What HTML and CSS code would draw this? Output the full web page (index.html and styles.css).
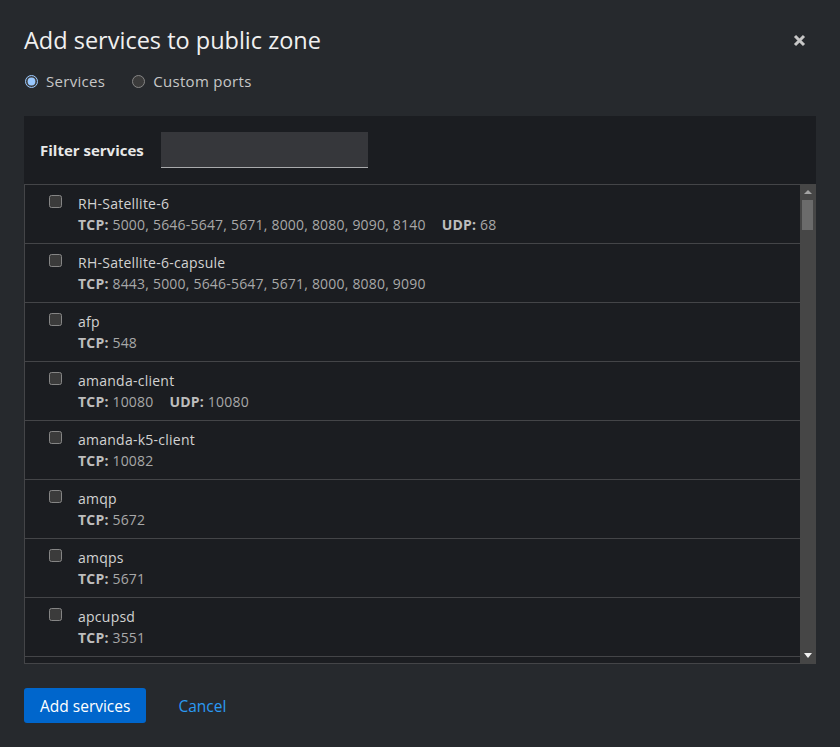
FILE: index.html
```html
<!DOCTYPE html>
<html lang="en">
<head>
<meta charset="utf-8">
<title>Add services to public zone</title>
<link rel="stylesheet" href="styles.css">
</head>
<body>
<div class="dialog">
  <header class="header">
    <h1 class="title">Add services to public zone</h1>
    <button class="close" type="button" aria-label="Close">
      <svg width="13" height="13" viewBox="0 0 13 13"><path d="M2 2 L11 11 M11 2 L2 11" stroke="#c7c7c7" stroke-width="3" stroke-linecap="butt"/></svg>
    </button>
  </header>
  <div class="radios">
    <label class="radio"><input type="radio" name="mode" checked> Services</label>
    <label class="radio"><input type="radio" name="mode"> Custom ports</label>
  </div>
  <section class="panel">
    <div class="filter">
      <label class="filter-label" for="filter">Filter services</label>
      <input class="filter-input" id="filter" type="text">
    </div>
    <div class="list-box">
    <ul class="list">
      <li class="row"><input type="checkbox" class="check"><div><div class="name">RH-Satellite-6</div><div class="ports"><span class="proto"><b>TCP:</b> 5000, 5646-5647, 5671, 8000, 8080, 9090, 8140</span><span class="proto"><b>UDP:</b> 68</span></div></div></li>
      <li class="row"><input type="checkbox" class="check"><div><div class="name">RH-Satellite-6-capsule</div><div class="ports"><span class="proto"><b>TCP:</b> 8443, 5000, 5646-5647, 5671, 8000, 8080, 9090</span></div></div></li>
      <li class="row"><input type="checkbox" class="check"><div><div class="name">afp</div><div class="ports"><span class="proto"><b>TCP:</b> 548</span></div></div></li>
      <li class="row"><input type="checkbox" class="check"><div><div class="name">amanda-client</div><div class="ports"><span class="proto"><b>TCP:</b> 10080</span><span class="proto"><b>UDP:</b> 10080</span></div></div></li>
      <li class="row"><input type="checkbox" class="check"><div><div class="name">amanda-k5-client</div><div class="ports"><span class="proto"><b>TCP:</b> 10082</span></div></div></li>
      <li class="row"><input type="checkbox" class="check"><div><div class="name">amqp</div><div class="ports"><span class="proto"><b>TCP:</b> 5672</span></div></div></li>
      <li class="row"><input type="checkbox" class="check"><div><div class="name">amqps</div><div class="ports"><span class="proto"><b>TCP:</b> 5671</span></div></div></li>
      <li class="row"><input type="checkbox" class="check"><div><div class="name">apcupsd</div><div class="ports"><span class="proto"><b>TCP:</b> 3551</span></div></div></li>
      <li class="row"><input type="checkbox" class="check"><div><div class="name">audit</div><div class="ports"><span class="proto"><b>TCP:</b> 60</span></div></div></li>
      <li class="row"><input type="checkbox" class="check"><div><div class="name">bacula</div><div class="ports"><span class="proto"><b>TCP:</b> 9101, 9102, 9103</span></div></div></li>
      <li class="row"><input type="checkbox" class="check"><div><div class="name">bacula-client</div><div class="ports"><span class="proto"><b>TCP:</b> 9102</span></div></div></li>
      <li class="row"><input type="checkbox" class="check"><div><div class="name">bgp</div><div class="ports"><span class="proto"><b>TCP:</b> 179</span></div></div></li>
      <li class="row"><input type="checkbox" class="check"><div><div class="name">bitcoin</div><div class="ports"><span class="proto"><b>TCP:</b> 8333</span></div></div></li>
      <li class="row"><input type="checkbox" class="check"><div><div class="name">bitcoin-rpc</div><div class="ports"><span class="proto"><b>TCP:</b> 8332</span></div></div></li>
    </ul>
    <div class="scrollbar" aria-hidden="true">
      <span class="sb-up"></span>
      <span class="sb-thumb"></span>
      <span class="sb-space"></span>
      <span class="sb-down"></span>
    </div>
    </div>
  </section>
  <footer class="footer">
    <button class="btn btn-primary" type="button">Add services</button>
    <button class="btn btn-link" type="button">Cancel</button>
  </footer>
</div>
</body>
</html>
```

FILE: styles.css
```css
html {
  color-scheme: dark;
}

body {
  margin: 0;
  background: #26292d;
  font-family: "Open Sans", "Liberation Sans", sans-serif;
  color: #d2d2d2;
}

.dialog {
  padding: 24px;
}

.header {
  display: flex;
  align-items: center;
  justify-content: space-between;
  height: 32px;
}

.title {
  margin: 0;
  font-size: 23.5px;
  font-weight: 400;
  line-height: 32px;
  color: #f0f0f0;
}

.close {
  width: 33px;
  height: 32px;
  padding: 0;
  border: 0;
  background: none;
  display: flex;
  align-items: center;
  justify-content: center;
}

.radios {
  display: flex;
  align-items: center;
  margin-top: 13px;
  height: 24px;
}

.radio {
  display: flex;
  align-items: center;
  gap: 8px;
  font-size: 15px;
  letter-spacing: 0.3px;
  color: #c7c7c7;
  margin-right: 26px;
}

.radio input {
  margin: 0 0 0 1px;
  width: 13px;
  height: 13px;
}

.panel {
  margin-top: 23px;
  background: #1b1d21;
}

.filter {
  display: flex;
  align-items: center;
  gap: 17px;
  padding: 16px;
}

.filter-label {
  font-size: 15px;
  font-weight: 700;
  color: #e8e8e8;
}

.filter-input {
  box-sizing: border-box;
  width: 207px;
  height: 36px;
  background: #36373b;
  border: 0;
  border-bottom: 1px solid #a9aaac;
  color: #e0e0e0;
  font: inherit;
  outline: none;
}

.list-box {
  display: flex;
  height: 480px;
}

.list {
  flex: 1;
  box-sizing: border-box;
  height: 100%;
  list-style: none;
  margin: 0;
  padding: 0;
  overflow: hidden;
  border: 1px solid #444548;
  border-right: 0;
}

.scrollbar {
  width: 16px;
  flex: none;
  box-sizing: border-box;
  display: flex;
  flex-direction: column;
  align-items: center;
  padding: 6px 3px 6px 2px;
  background: #464646;
}

.sb-up {
  width: 0;
  height: 0;
  border-left: 4px solid transparent;
  border-right: 4px solid transparent;
  border-bottom: 4px solid #a3a3a3;
}

.sb-thumb {
  width: 11px;
  height: 30px;
  margin-top: 6px;
  background: #6b6b6b;
}

.sb-space {
  flex: 1;
}

.sb-down {
  width: 0;
  height: 0;
  border-left: 4px solid transparent;
  border-right: 4px solid transparent;
  border-top: 5px solid #f2f2f2;
}

.row {
  display: flex;
  align-items: flex-start;
  gap: 16px;
  padding: 8px 24px;
  border-bottom: 1px solid #444548;
}

.check {
  margin: 2px 0 0 0;
  width: 13px;
  height: 13px;
  flex: none;
}

.name {
  font-size: 14px;
  line-height: 21px;
  letter-spacing: 0.25px;
  color: #d2d2d2;
}

.ports {
  font-size: 14px;
  line-height: 21px;
  letter-spacing: 0.2px;
  color: #a8a8a8;
  display: flex;
}

.proto {
  margin-right: 16px;
}

.proto b {
  font-weight: 700;
  color: #bdbdbd;
}

.footer {
  display: flex;
  align-items: center;
  gap: 16px;
  margin-top: 24px;
}

.btn {
  height: 35px;
  padding: 0 16px;
  border: 0;
  border-radius: 3px;
  font-family: inherit;
  font-size: 15.5px;
  cursor: pointer;
}

.btn-primary {
  background: #0066cc;
  color: #ffffff;
}

.btn-link {
  background: none;
  color: #2b9af3;
}
```
